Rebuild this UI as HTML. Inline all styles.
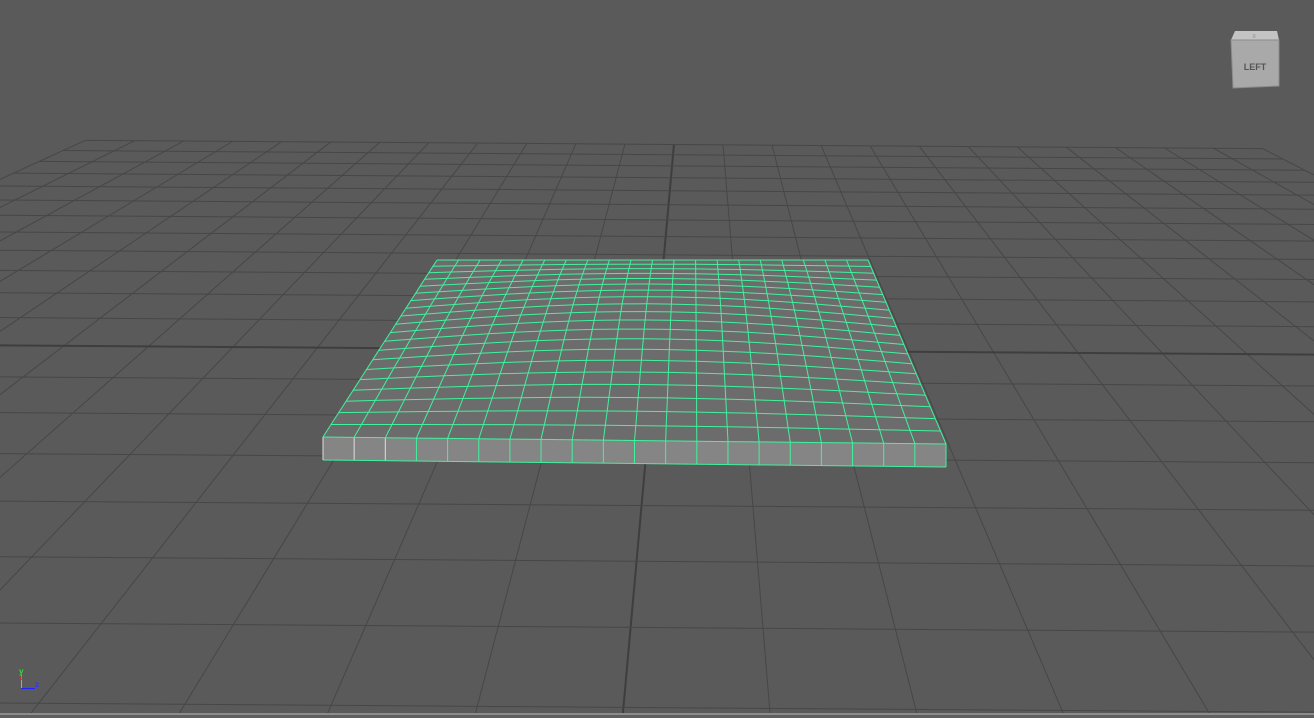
<!DOCTYPE html>
<html><head><meta charset="utf-8"><style>
html,body{margin:0;padding:0;background:#5a5a5a;width:1314px;height:718px;overflow:hidden}
svg{display:block;overflow:hidden}
</style></head><body>
<svg id="s" width="1314" height="718" viewBox="0 0 1314 718" xmlns="http://www.w3.org/2000/svg">
<rect width="1314" height="718" fill="#5a5a5a"/>
<g id="grid" transform="rotate(0.4 657 359)"></g>
<g id="mesh"></g>
<rect x="0" y="713" width="1314" height="2" fill="#8c8c8c"/>
<rect x="0" y="715" width="1314" height="3" fill="#5f5f5f"/>
<g>
<polygon points="1235,31 1277,31 1279,40 1231,40" fill="#c4c4c4"/>
<polygon points="1231,40 1279,40 1279,86 1233,88" fill="#a9a9a9" stroke="#8a8a8a" stroke-width="1"/>
<text x="1255" y="70" font-family="Liberation Sans, sans-serif" font-size="9" font-weight="bold" fill="#555" text-anchor="middle">LEFT</text>
<text x="1254" y="38" font-family="Liberation Sans, sans-serif" font-size="6" fill="#888" text-anchor="middle">≡</text>
</g>
<g font-family="Liberation Sans, sans-serif" font-size="8" font-weight="bold">
<line x1="21.5" y1="675" x2="21.5" y2="689" stroke="#2f2" stroke-width="1"/>
<line x1="21" y1="688.5" x2="35" y2="688.5" stroke="#22f" stroke-width="1"/>
<text x="19" y="674" fill="#3d3">y</text>
<text x="19" y="680" fill="#e22" font-size="6">x</text>
<text x="35" y="687" fill="#33f">z</text>
</g>
</svg>
<script>
var NS="http://www.w3.org/2000/svg";
function L(g,x1,y1,x2,y2,c,w){var l=document.createElementNS(NS,"line");l.setAttribute("x1",x1);l.setAttribute("y1",y1);l.setAttribute("x2",x2);l.setAttribute("y2",y2);l.setAttribute("stroke",c);l.setAttribute("stroke-width",w||1);g.appendChild(l);}
var g=document.getElementById("grid");
var VX=696,VY=-140,T0=1/490,DT=-0.000123;
function yk(k){return 1/(T0+k*DT)+VY;}
var yTop=yk(-12),yBot=718;
for(var i=-12;i<=12;i++){
 var xb=625+i*148;
 var xat=function(y){return VX+(xb-VX)*(y-VY)/(718-VY);};
 L(g,xat(yTop),yTop,xat(yBot),yBot,i==0?"#3e3e3e":"#474747",i==0?2:1);
}
for(var k=-12;k<=12;k++){
 var y=yk(k); if(y>712||y<0)continue;
 var xl=VX+(625-12*148-VX)*(y-VY)/(718-VY), xr=VX+(625+12*148-VX)*(y-VY)/(718-VY);
 L(g,xl,y,xr,y,k==0?"#3e3e3e":"#474747",k==0?2:1);
}
var m=document.getElementById("mesh");
var N=20;
var tA=1/(263-VY),tB=1/(440-VY);
function P(u,v){
 var t=tA+(tB-tA)*u; var y=1/t+VY;
 var f=(y-263)/(440-263);
 var xl=437+(323-437)*f, xr=868+(946-868)*f;
 var x=xl+(xr-xl)*v;
 y+= -3 + 7*v*f;
 y-= 14*Math.sin(Math.PI*u)*Math.sin(Math.PI*v);
 return [x,y];
}
var pts=[];
for(var j=0;j<=N;j++)pts.push(P(0,j/N));
for(var j=0;j<=N;j++)pts.push(P(j/N,1));
for(var j=N;j>=0;j--)pts.push(P(1,j/N));
for(var j=N;j>=0;j--)pts.push(P(j/N,0));
var pg=document.createElementNS(NS,"polygon");pg.setAttribute("points",pts.map(function(p){return p.join(",")}).join(" "));pg.setAttribute("fill","#6c6c6c");m.appendChild(pg);
var fl=P(1,0),fr=P(1,1);
var ff=document.createElementNS(NS,"polygon");
ff.setAttribute("points",[fl[0],fl[1],fr[0],fr[1],fr[0],fr[1]+23,fl[0],fl[1]+23].join(","));ff.setAttribute("fill","#858585");m.appendChild(ff);
var GC="#40f29e";
for(var i=0;i<=N;i++){
 var d="M";
 for(var j=0;j<=N;j++){var p=P(i/N,j/N);d+=(j?" L":"")+p[0].toFixed(1)+" "+p[1].toFixed(1);}
 var pa=document.createElementNS(NS,"path");pa.setAttribute("d",d);pa.setAttribute("stroke",GC);pa.setAttribute("fill","none");pa.setAttribute("stroke-width","1");m.appendChild(pa);
 var d2="M";
 for(var j=0;j<=N;j++){var p=P(j/N,i/N);d2+=(j?" L":"")+p[0].toFixed(1)+" "+p[1].toFixed(1);}
 var pb=document.createElementNS(NS,"path");pb.setAttribute("d",d2);pb.setAttribute("stroke",GC);pb.setAttribute("fill","none");pb.setAttribute("stroke-width","1");m.appendChild(pb);
 var q=P(1,i/N);
 L(m,q[0],q[1],q[0],q[1]+23,i<3?"#dddddd":GC,1);
}
L(m,fl[0],fl[1]+23,fr[0],fr[1]+23,GC,1);
</script>
</body></html>
